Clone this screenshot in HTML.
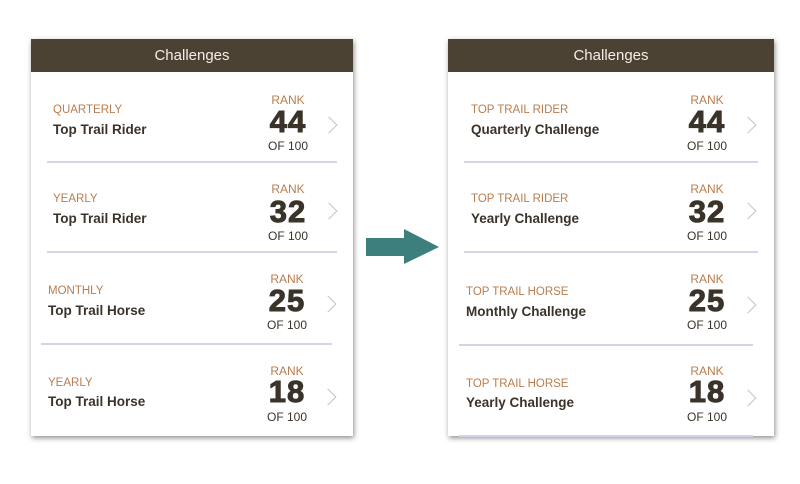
<!DOCTYPE html>
<html><head><meta charset="utf-8"><style>
body{margin:0;width:800px;height:484px;background:#fff;position:relative;overflow:hidden;font-family:"Liberation Sans",sans-serif}
.p{position:absolute;top:39px;height:397px;background:#fff;box-shadow:1px 2px 5px rgba(0,0,0,.45)}
.h{position:absolute;left:0;right:0;top:0;height:33px;background:#4c4234;color:#f2efe9;font-size:15px;text-align:center;line-height:34px}
.t{position:absolute;white-space:nowrap;line-height:16px}
.l{font-size:11.5px;color:#b97d4f}
.ti{font-size:13.5px;font-weight:bold;color:#3a332a}
.r{font-size:12px;color:#b97d4f;width:60px;text-align:center}
.n{font-size:31px;font-weight:bold;color:#3a332a;width:60px;text-align:center;line-height:30px;letter-spacing:1px;-webkit-text-stroke:1px #3a332a}
.o{font-size:12px;color:#3a332a;width:60px;text-align:center}
.s{position:absolute;height:2px;background:#d9d0ec}
.c{position:absolute;width:11px;height:11px;border-right:1.5px solid #c4c4c4;border-top:1.5px solid #c4c4c4;transform:rotate(45deg)}
</style></head><body>
<div class="p" style="left:31px;width:322px">
<div class="h">Challenges</div>
</div>
<div class="p" style="left:448px;width:326px">
<div class="h">Challenges</div>
</div>

<div class="t l" style="left:53px;top:102px">QUARTERLY</div>
<div class="t ti" style="left:53px;top:122px">Top Trail Rider</div>
<div class="t r" style="left:258px;top:92px">RANK</div>
<div class="t n" style="left:258px;top:107px">44</div>
<div class="t o" style="left:258px;top:138px">OF 100</div>
<div class="c" style="left:323px;top:119px"></div>
<div class="s" style="left:47px;width:290px;top:161px"></div>

<div class="t l" style="left:53px;top:191px">YEARLY</div>
<div class="t ti" style="left:53px;top:211px">Top Trail Rider</div>
<div class="t r" style="left:258px;top:181px">RANK</div>
<div class="t n" style="left:258px;top:197px">32</div>
<div class="t o" style="left:258px;top:228px">OF 100</div>
<div class="c" style="left:323px;top:205px"></div>
<div class="s" style="left:47px;width:290px;top:251px"></div>

<div class="t l" style="left:48px;top:283px">MONTHLY</div>
<div class="t ti" style="left:48px;top:303px">Top Trail Horse</div>
<div class="t r" style="left:257px;top:271px">RANK</div>
<div class="t n" style="left:257px;top:286px">25</div>
<div class="t o" style="left:257px;top:317px">OF 100</div>
<div class="c" style="left:322px;top:298px"></div>
<div class="s" style="left:41px;width:291px;top:343px"></div>

<div class="t l" style="left:48px;top:375px">YEARLY</div>
<div class="t ti" style="left:48px;top:394px">Top Trail Horse</div>
<div class="t r" style="left:257px;top:363px">RANK</div>
<div class="t n" style="left:257px;top:377px">18</div>
<div class="t o" style="left:257px;top:409px">OF 100</div>
<div class="c" style="left:322px;top:391px"></div>

<svg style="position:absolute;left:0;top:0" width="800" height="484"><polygon points="366,238 404,238 404,229 439,247 404,264 404,256 366,256" fill="#3d7f7c"/></svg>

<div class="t l" style="left:471px;top:102px">TOP TRAIL RIDER</div>
<div class="t ti" style="left:471px;top:122px">Quarterly Challenge</div>
<div class="t r" style="left:677px;top:92px">RANK</div>
<div class="t n" style="left:677px;top:107px">44</div>
<div class="t o" style="left:677px;top:138px">OF 100</div>
<div class="c" style="left:742px;top:119px"></div>
<div class="s" style="left:464px;width:294px;top:161px"></div>

<div class="t l" style="left:471px;top:191px">TOP TRAIL RIDER</div>
<div class="t ti" style="left:471px;top:211px">Yearly Challenge</div>
<div class="t r" style="left:677px;top:181px">RANK</div>
<div class="t n" style="left:677px;top:197px">32</div>
<div class="t o" style="left:677px;top:228px">OF 100</div>
<div class="c" style="left:742px;top:205px"></div>
<div class="s" style="left:464px;width:294px;top:251px"></div>

<div class="t l" style="left:466px;top:284px">TOP TRAIL HORSE</div>
<div class="t ti" style="left:466px;top:304px">Monthly Challenge</div>
<div class="t r" style="left:677px;top:271px">RANK</div>
<div class="t n" style="left:677px;top:286px">25</div>
<div class="t o" style="left:677px;top:317px">OF 100</div>
<div class="c" style="left:742px;top:299px"></div>
<div class="s" style="left:459px;width:294px;top:344px"></div>

<div class="t l" style="left:466px;top:376px">TOP TRAIL HORSE</div>
<div class="t ti" style="left:466px;top:395px">Yearly Challenge</div>
<div class="t r" style="left:677px;top:363px">RANK</div>
<div class="t n" style="left:677px;top:377px">18</div>
<div class="t o" style="left:677px;top:409px">OF 100</div>
<div class="c" style="left:742px;top:392px"></div>
<div class="s" style="left:459px;width:294px;top:435px"></div>
</body></html>
